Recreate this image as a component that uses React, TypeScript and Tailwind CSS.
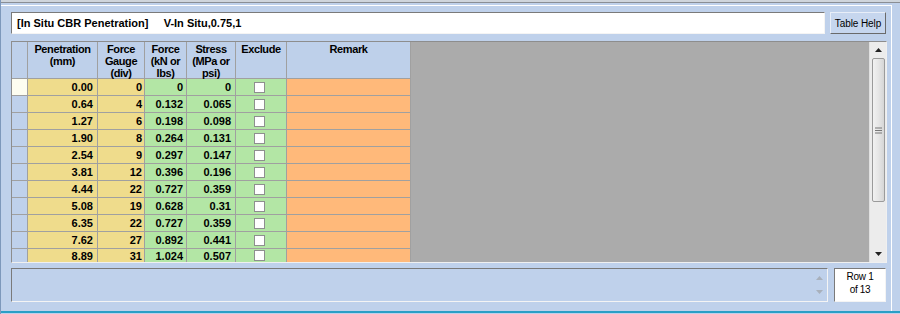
import React from "react";

const rows = [
  ["0.00", "0", "0", "0"],
  ["0.64", "4", "0.132", "0.065"],
  ["1.27", "6", "0.198", "0.098"],
  ["1.90", "8", "0.264", "0.131"],
  ["2.54", "9", "0.297", "0.147"],
  ["3.81", "12", "0.396", "0.196"],
  ["4.44", "22", "0.727", "0.359"],
  ["5.08", "19", "0.628", "0.31"],
  ["6.35", "22", "0.727", "0.359"],
  ["7.62", "27", "0.892", "0.441"],
  ["8.89", "31", "1.024", "0.507"],
];

function Header() {
  return (
    <div className="flex h-[37px] shrink-0 bg-[#bed0ea] text-[11px] font-bold leading-[12px] tracking-[-0.4px] text-black">
      <div className="w-[16px] shrink-0 border-r border-b border-[#a0a0a0]" />
      <div className="w-[70px] shrink-0 border-r border-b border-[#a0a0a0] pt-[1px] text-center">Penetration<br />(mm)</div>
      <div className="w-[47px] shrink-0 border-r border-b border-[#a0a0a0] pt-[1px] text-center">Force<br />Gauge<br />(div)</div>
      <div className="w-[42px] shrink-0 border-r border-b border-[#a0a0a0] pt-[1px] text-center">Force<br />(kN or<br />lbs)</div>
      <div className="w-[49px] shrink-0 border-r border-b border-[#a0a0a0] pt-[1px] text-center">Stress<br />(MPa or<br />psi)</div>
      <div className="w-[51px] shrink-0 border-r border-b border-[#a0a0a0] pt-[1px] text-center">Exclude</div>
      <div className="w-[124px] shrink-0 border-r border-b border-[#a0a0a0] pt-[1px] text-center">Remark</div>
    </div>
  );
}

function Row({ r, first, last }: { r: string[]; first: boolean; last: boolean }) {
  const h = last ? "h-[14px] leading-[14px]" : "h-[17px] leading-[16px]";
  return (
    <div className={`flex shrink-0 text-[11px] font-bold text-black ${h}`}>
      <div className={`w-[16px] shrink-0 border-r border-b border-[#a0a0a0] ${first ? "bg-[#fdfdf0]" : "bg-[#bfd1eb]"}`} />
      <div className="w-[70px] shrink-0 border-r border-b border-[#a0a0a0] bg-[#efdc8c] pr-[4px] text-right">{r[0]}</div>
      <div className="w-[47px] shrink-0 border-r border-b border-[#a0a0a0] bg-[#efdc8c] pr-[2px] text-right">{r[1]}</div>
      <div className="w-[42px] shrink-0 border-r border-b border-[#a0a0a0] bg-[#b3e6a5] pr-[3px] text-right">{r[2]}</div>
      <div className="w-[49px] shrink-0 border-r border-b border-[#a0a0a0] bg-[#b3e6a5] pr-[4px] text-right">{r[3]}</div>
      <div className={`w-[51px] shrink-0 border-r border-b border-[#a0a0a0] bg-[#b3e6a5] flex justify-center pr-[4px] ${last ? "items-start pt-[1px]" : "items-center"}`}>
        <div className="w-[11px] h-[11px] bg-white border border-[#8e8f8f]" />
      </div>
      <div className="w-[124px] shrink-0 border-r border-b border-[#a0a0a0] bg-[#ffb97a]" />
    </div>
  );
}

function VScroll() {
  return (
    <div className="w-[17px] shrink-0 bg-[#ececec] border-l border-[#e0e0e0] flex flex-col items-center">
      <div className="h-[16px] w-full flex items-center justify-center">
        <svg width="7" height="4" viewBox="0 0 7 4"><polygon points="3.5,0 7,4 0,4" fill="#222" /></svg>
      </div>
      <div className="w-[13px] h-[144px] rounded-[2px] border border-[#9b9b9b] bg-gradient-to-r from-[#f2f2f2] via-[#e6e6e6] to-[#d6d6d6] flex items-center justify-center">
        <svg width="7" height="7" viewBox="0 0 7 7">
          <line x1="0" y1="1" x2="7" y2="1" stroke="#777" />
          <line x1="0" y1="3.5" x2="7" y2="3.5" stroke="#777" />
          <line x1="0" y1="6" x2="7" y2="6" stroke="#777" />
        </svg>
      </div>
      <div className="flex-1" />
      <div className="h-[16px] w-full flex items-center justify-center">
        <svg width="7" height="4" viewBox="0 0 7 4"><polygon points="0,0 7,0 3.5,4" fill="#222" /></svg>
      </div>
    </div>
  );
}

export default function App() {
  return (
    <div className="w-[900px] h-[314px] bg-[#bfd1eb] flex flex-col border-l border-[#7d98bb] font-['Liberation_Sans',Arial,sans-serif] overflow-hidden">
      <div className="h-[2px] bg-[#cfd5dc] shrink-0" />
      <div className="h-[1px] bg-[#8a8e94] shrink-0" />
      <div className="h-[2px] shrink-0" />
      <div className="flex-1 w-[891px] border-t border-r border-white flex flex-col pl-[10px] pt-[6px]">
        <div className="flex h-[22px] gap-[5px]">
          <div className="w-[814px] h-[22px] bg-white border border-t-[#7a7a7a] border-l-[#7a7a7a] border-b-[#f4f4f4] border-r-[#f4f4f4] flex items-center pl-[5px] text-[11px] font-bold text-black whitespace-pre">
            {"[In Situ CBR Penetration]     V-In Situ,0.75,1"}
          </div>
          <div className="w-[56px] h-[22px] bg-[#c6d6ee] border border-t-[#e8eef8] border-l-[#e8eef8] border-b-[#6a6a6a] border-r-[#6a6a6a] flex items-center justify-center text-[10px] tracking-[-0.1px] text-black">
            Table Help
          </div>
        </div>
        <div className="mt-[7px] w-[876px] h-[222px] flex border border-t-[#8d8d8d] border-l-[#8d8d8d] border-b-[#f0f0f0] border-r-[#f0f0f0] overflow-hidden">
          <div className="w-[399px] shrink-0 flex flex-col">
            <Header />
            {rows.map((r, i) => (
              <Row key={i} r={r} first={i === 0} last={i === rows.length - 1} />
            ))}
          </div>
          <div className="flex-1 bg-[#ababab]" />
          <VScroll />
        </div>
        <div className="mt-[5px] flex h-[34px] gap-[6px]">
          <div className="w-[817px] h-[34px] border border-t-[#7a7a7a] border-l-[#7a7a7a] border-b-[#f4f4f4] border-r-[#f4f4f4] flex justify-end">
            <div className="w-[14px] flex flex-col items-center justify-between py-[7px] mr-[1px]">
              <svg width="7" height="4" viewBox="0 0 7 4"><polygon points="3.5,0 7,4 0,4" fill="#a8b0bb" /></svg>
              <svg width="7" height="4" viewBox="0 0 7 4"><polygon points="0,0 7,0 3.5,4" fill="#a8b0bb" /></svg>
            </div>
          </div>
          <div className="w-[52px] h-[34px] bg-white border border-t-[#7a7a7a] border-l-[#7a7a7a] border-b-[#f4f4f4] border-r-[#f4f4f4] flex flex-col items-center pt-[1px] text-[10px] leading-[13px] tracking-[-0.3px] text-black">
            <div>Row 1</div>
            <div>of 13</div>
          </div>
        </div>
      </div>
      <div className="h-[2px] bg-[#2a9fc6] shrink-0" />
      <div className="h-[1px] bg-[#bfd1eb] shrink-0" />
    </div>
  );
}
